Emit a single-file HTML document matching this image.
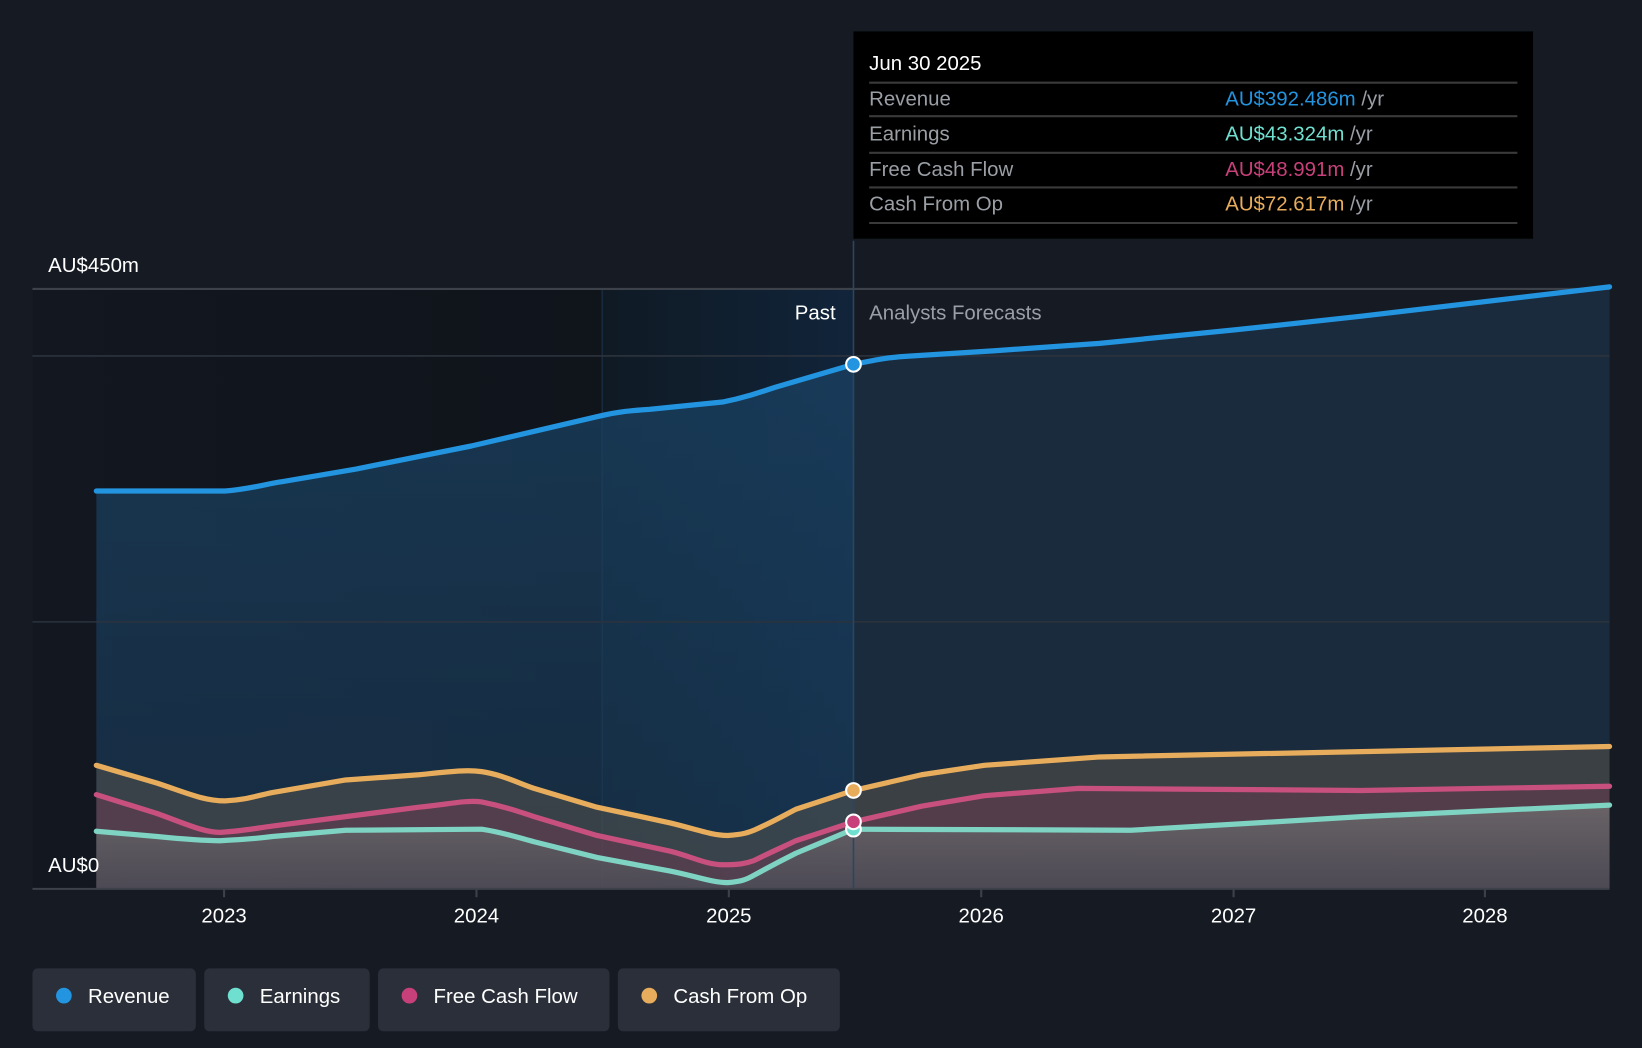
<!DOCTYPE html>
<html><head><meta charset="utf-8"><style>
html,body{margin:0;padding:0;background:#161b23;width:1642px;height:1048px;overflow:hidden}
svg{display:block}
text{font-family:"Liberation Sans",sans-serif}
</style></head><body>
<svg width="1642" height="1048" viewBox="0 0 1568 1001" preserveAspectRatio="none" xmlns="http://www.w3.org/2000/svg">
<defs>
<linearGradient id="pastdark" x1="0" x2="1" y1="0" y2="0"><stop offset="0" stop-color="#121720"/><stop offset="1" stop-color="#10141b"/></linearGradient>
<linearGradient id="hl" x1="0" x2="1" y1="0" y2="0"><stop offset="0" stop-color="#0f1a24"/><stop offset="1" stop-color="#11243a"/></linearGradient>
<linearGradient id="revfill" x1="0" x2="0" y1="0" y2="1"><stop offset="0" stop-color="#1a4466" stop-opacity="0.75"/><stop offset="1" stop-color="#1a3a58" stop-opacity="0.6"/></linearGradient>
<linearGradient id="grey" x1="0" x2="0" y1="0" y2="1"><stop offset="0" stop-color="#707070" stop-opacity="0.75"/><stop offset="1" stop-color="#4a4f58" stop-opacity="0.7"/></linearGradient>
<clipPath id="cp"><rect x="0" y="0" width="815" height="1001"/></clipPath>
<clipPath id="cf"><rect x="815" y="0" width="800" height="1001"/></clipPath>
</defs>
<rect width="1568" height="1001" fill="#161b23"/>
<rect x="31" y="276" width="544" height="573" fill="url(#pastdark)"/>
<rect x="575" y="276" width="240" height="573" fill="url(#hl)"/>
<line x1="575" y1="276" x2="575" y2="849" stroke="#1f3448" stroke-width="1"/>
<g id="rf">
<path clip-path="url(#cp)" d="M92,469 L215,469 C240,467 250,463 270,460 L340,448 L450,426 L570,398 C590,393 605,392 620,391 L690,384 C710,380 725,375 740,370 L815,348 C840,343 850,341 870,340 L950,335 L1050,328 L1180,315 L1300,302 L1537,274 L1537,849 L92,849 Z" fill="url(#revfill)"/>
<path clip-path="url(#cf)" d="M92,469 L215,469 C240,467 250,463 270,460 L340,448 L450,426 L570,398 C590,393 605,392 620,391 L690,384 C710,380 725,375 740,370 L815,348 C840,343 850,341 870,340 L950,335 L1050,328 L1180,315 L1300,302 L1537,274 L1537,849 L92,849 Z" fill="#1b2b3e"/>
</g>
<path d="M92,731 L150,748 C180,758 195,765 215,765 C235,764 245,760 260,757 L330,745 L400,740 C430,737 445,735 460,737 C480,740 495,748 510,753 L570,771 L640,786 C665,792 680,798 695,798 C710,797 715,795 720,793 C740,784 750,778 760,773 L815,755 L880,740 L940,731 L1050,723 L1537,713 L1537,849 L92,849 Z" fill="#6b6250" fill-opacity="0.4"/>
<path d="M92,759 L150,777 C180,788 195,795 210,795 C230,794 245,791 260,789 L330,780 L400,771 C430,768 445,764 460,766 C480,770 495,775 510,780 L570,798 L640,813 C660,818 675,826 690,826 C705,826 712,825 720,822 C740,812 750,808 760,803 L815,785 L880,770 L940,760 L1030,753 L1300,755 L1537,751 L1537,849 L92,849 Z" fill="#7a3a55" fill-opacity="0.4"/>
<path d="M92,794 L150,799 C180,802 195,803 210,803 C230,802 245,801 260,799 L330,793 L460,792 C480,795 495,800 510,804 L570,819 L640,832 C665,837 680,843 695,843 C708,842 713,840 720,836 C740,825 750,820 760,815 L815,792 L1080,793 L1200,786 L1300,780 L1537,769 L1537,849 L92,849 Z" fill="url(#grey)"/>
<line x1="31" y1="276" x2="1537" y2="276" stroke="#3d424a" stroke-width="2"/>
<line x1="31" y1="340" x2="1537" y2="340" stroke="#2c333d" stroke-width="1.5"/>
<line x1="31" y1="594" x2="1537" y2="594" stroke="#2c333d" stroke-width="1.5"/>
<line x1="31" y1="849" x2="1537" y2="849" stroke="#3d424a" stroke-width="2"/>
<line x1="815" y1="230" x2="815" y2="849" stroke="#2b4660" stroke-width="1.5"/>
<g stroke="#3d424a" stroke-width="2">
<line x1="214" y1="849" x2="214" y2="857"/><line x1="455" y1="849" x2="455" y2="857"/><line x1="696" y1="849" x2="696" y2="857"/><line x1="937" y1="849" x2="937" y2="857"/><line x1="1178" y1="849" x2="1178" y2="857"/><line x1="1418" y1="849" x2="1418" y2="857"/>
</g>
<g fill="none" stroke-width="5" stroke-linecap="round" stroke-linejoin="round">
<path d="M92,794 L150,799 C180,802 195,803 210,803 C230,802 245,801 260,799 L330,793 L460,792 C480,795 495,800 510,804 L570,819 L640,832 C665,837 680,843 695,843 C708,842 713,840 720,836 C740,825 750,820 760,815 L815,792 L1080,793 L1200,786 L1300,780 L1537,769" stroke="#7fd3c2"/>
<path d="M92,759 L150,777 C180,788 195,795 210,795 C230,794 245,791 260,789 L330,780 L400,771 C430,768 445,764 460,766 C480,770 495,775 510,780 L570,798 L640,813 C660,818 675,826 690,826 C705,826 712,825 720,822 C740,812 750,808 760,803 L815,785 L880,770 L940,760 L1030,753 L1300,755 L1537,751" stroke="#c8507f"/>
<path d="M92,731 L150,748 C180,758 195,765 215,765 C235,764 245,760 260,757 L330,745 L400,740 C430,737 445,735 460,737 C480,740 495,748 510,753 L570,771 L640,786 C665,792 680,798 695,798 C710,797 715,795 720,793 C740,784 750,778 760,773 L815,755 L880,740 L940,731 L1050,723 L1537,713" stroke="#e8ad5c"/>
<path d="M92,469 L215,469 C240,467 250,463 270,460 L340,448 L450,426 L570,398 C590,393 605,392 620,391 L690,384 C710,380 725,375 740,370 L815,348 C840,343 850,341 870,340 L950,335 L1050,328 L1180,315 L1300,302 L1537,274" stroke="#2394e0"/>
</g>
<circle cx="815" cy="792" r="7" fill="#6fe0d0" stroke="#fff" stroke-width="2"/>
<circle cx="815" cy="785" r="7" fill="#c8407a" stroke="#fff" stroke-width="2"/>
<circle cx="815" cy="755" r="7" fill="#e8ad5c" stroke="#fff" stroke-width="2"/>
<circle cx="815" cy="348" r="7" fill="#2394e0" stroke="#fff" stroke-width="2"/>
<text x="46" y="260" fill="#fff" font-size="19.5">AU$450m</text>
<text x="46" y="833" fill="#fff" font-size="19.5">AU$0</text>
<text x="798" y="305" fill="#fff" font-size="19.5" text-anchor="end">Past</text>
<text x="830" y="305" fill="#9a9ea5" font-size="19.5">Analysts Forecasts</text>
<g fill="#fff" font-size="19.5" text-anchor="middle">
<text x="214" y="881">2023</text><text x="455" y="881">2024</text><text x="696" y="881">2025</text><text x="937" y="881">2026</text><text x="1178" y="881">2027</text><text x="1418" y="881">2028</text>
</g>
<rect x="815" y="30" width="649" height="198" fill="#000"/>
<text x="830" y="67" fill="#fff" font-size="19.5">Jun 30 2025</text>
<g stroke="#3a3a3a" stroke-width="2">
<line x1="830" y1="79" x2="1449" y2="79"/><line x1="830" y1="111" x2="1449" y2="111"/><line x1="830" y1="146" x2="1449" y2="146"/><line x1="830" y1="179" x2="1449" y2="179"/><line x1="830" y1="213" x2="1449" y2="213"/>
</g>
<g font-size="19.5">
<text x="830" y="101" fill="#9a9ea5">Revenue</text>
<text x="1170" y="101"><tspan fill="#2394e0">AU$392.486m</tspan><tspan fill="#9a9ea5"> /yr</tspan></text>
<text x="830" y="134" fill="#9a9ea5">Earnings</text>
<text x="1170" y="134"><tspan fill="#6fe0d0">AU$43.324m</tspan><tspan fill="#9a9ea5"> /yr</tspan></text>
<text x="830" y="168" fill="#9a9ea5">Free Cash Flow</text>
<text x="1170" y="168"><tspan fill="#c8407a">AU$48.991m</tspan><tspan fill="#9a9ea5"> /yr</tspan></text>
<text x="830" y="201" fill="#9a9ea5">Cash From Op</text>
<text x="1170" y="201"><tspan fill="#e8ad5c">AU$72.617m</tspan><tspan fill="#9a9ea5"> /yr</tspan></text>
</g>
<g fill="#2a2f39">
<rect x="31" y="925" width="156" height="60" rx="5"/>
<rect x="195" y="925" width="158" height="60" rx="5"/>
<rect x="361" y="925" width="221" height="60" rx="5"/>
<rect x="590" y="925" width="212" height="60" rx="5"/>
</g>
<circle cx="61" cy="951" r="7.5" fill="#2394e0"/>
<circle cx="225" cy="951" r="7.5" fill="#6fe0d0"/>
<circle cx="391" cy="951" r="7.5" fill="#c8407a"/>
<circle cx="620" cy="951" r="7.5" fill="#e8ad5c"/>
<g fill="#fff" font-size="19.5">
<text x="84" y="958">Revenue</text><text x="248" y="958">Earnings</text><text x="414" y="958">Free Cash Flow</text><text x="643" y="958">Cash From Op</text>
</g>
</svg>
</body></html>
